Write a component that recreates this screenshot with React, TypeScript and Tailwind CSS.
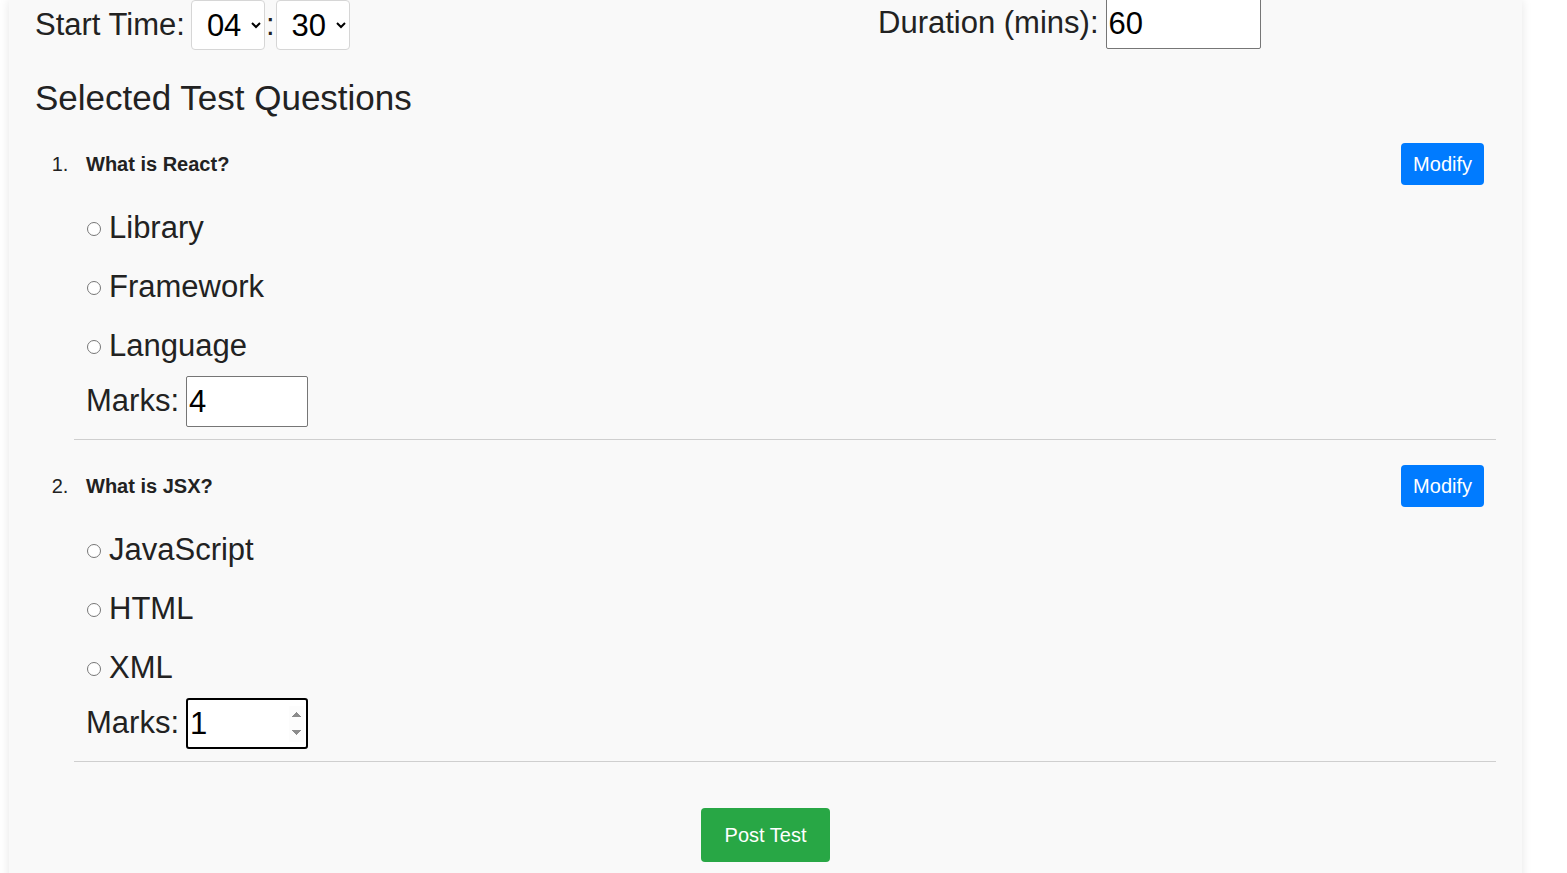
import { useState } from 'react'

type Question = {
  id: number
  text: string
  options: string[]
  marks: string
}

const initialQuestions: Question[] = [
  { id: 1, text: 'What is React?', options: ['Library', 'Framework', 'Language'], marks: '4' },
  { id: 2, text: 'What is JSX?', options: ['JavaScript', 'HTML', 'XML'], marks: '1' },
]

const hours = Array.from({ length: 24 }, (_, i) => String(i).padStart(2, '0'))
const minutes = ['00', '15', '30', '45']

export default function App() {
  const [hour, setHour] = useState('04')
  const [minute, setMinute] = useState('30')
  const [duration, setDuration] = useState('60')
  const [questions, setQuestions] = useState(initialQuestions)

  const setMarks = (id: number, value: string) => {
    setQuestions((qs) => qs.map((q) => (q.id === id ? { ...q, marks: value } : q)))
  }

  return (
    <div className="min-h-screen bg-white font-['Liberation_Sans',Arial,sans-serif] text-[#222]">
      <div className="ml-[9px] w-[1513px] bg-[#f9f9f9] px-[26px] pb-10 shadow-[0_0_10px_rgba(0,0,0,0.1)]">
        {/* schedule row */}
        <div className="flex items-start">
          <div className="flex h-[50px] w-[843px] items-center text-[31px]">
            <span className="mr-[6px]">Start Time:</span>
            <select
              value={hour}
              onChange={(e) => setHour(e.target.value)}
              className="h-[50px] w-[74px] rounded-[4px] border border-[#d6d6d6] bg-white pl-[11px] text-[31px] text-black"
            >
              {hours.map((h) => (
                <option key={h}>{h}</option>
              ))}
            </select>
            <span className="mx-px">:</span>
            <select
              value={minute}
              onChange={(e) => setMinute(e.target.value)}
              className="h-[50px] w-[74px] rounded-[4px] border border-[#d6d6d6] bg-white pl-[11px] text-[31px] text-black"
            >
              {minutes.map((m) => (
                <option key={m}>{m}</option>
              ))}
            </select>
          </div>
          <div className="-mt-[2px] flex h-[51px] items-center text-[31px]">
            <span className="mr-[7px]">Duration (mins):</span>
            <input
              type="number"
              value={duration}
              onChange={(e) => setDuration(e.target.value)}
              className="h-[51px] w-[155px] rounded-[2px] border border-[#767676] bg-white px-[2px] text-[31px] text-black"
            />
          </div>
        </div>

        <h2 className="mt-[28px] text-[35px] leading-[39px]">Selected Test Questions</h2>

        <ol className="mt-[14px] list-decimal pl-[39px] marker:text-[20px]">
          {questions.map((q, i) => (
            <li key={q.id} className="mb-[13px] border-b border-[#cfcfcf] p-3">
              <div className="flex h-[42px] items-center justify-between">
                <span className="text-[20px] font-bold">{q.text}</span>
                <button className="h-[42px] rounded-[4px] bg-[#007bff] px-3 text-[20px] text-white">Modify</button>
              </div>
              <div className="mt-[26px] flex flex-col gap-[24px]">
                {q.options.map((opt) => (
                  <label key={opt} className="flex h-[35px] items-center text-[31px]">
                    <input type="radio" name={`q${q.id}`} className="ml-px mr-[8px] h-[14px] w-[14px]" />
                    {opt}
                  </label>
                ))}
              </div>
              <div className="mt-[12px] flex items-center text-[31px]">
                <span className="mr-[7px]">Marks:</span>
                <input
                  type="number"
                  value={q.marks}
                  autoFocus={i === 1}
                  onChange={(e) => setMarks(q.id, e.target.value)}
                  className={
                    i === 1
                      ? 'h-[51px] w-[122px] rounded-[3px] border-2 border-black bg-white px-[2px] text-[31px] text-black outline-none'
                      : 'h-[51px] w-[122px] rounded-[2px] border border-[#767676] bg-white px-[2px] text-[31px] text-black'
                  }
                />
              </div>
            </li>
          ))}
        </ol>

        <div className="mt-[46px] flex justify-center">
          <button className="h-[54px] rounded-[4px] bg-[#28a745] px-6 text-[20px] text-white">Post Test</button>
        </div>
      </div>
    </div>
  )
}
